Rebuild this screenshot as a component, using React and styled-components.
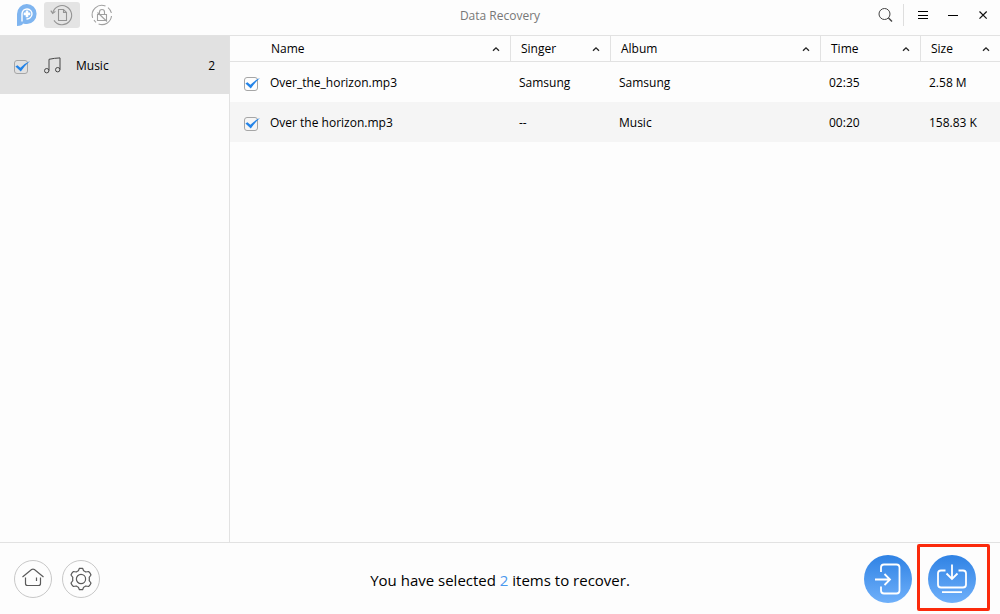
import { useState } from "react";
import styled, { createGlobalStyle } from "styled-components";

const files = [
  {
    name: "Over_the_horizon.mp3",
    singer: "Samsung",
    album: "Samsung",
    time: "02:35",
    size: "2.58 M",
  },
  {
    name: "Over the horizon.mp3",
    singer: "--",
    album: "Music",
    time: "00:20",
    size: "158.83 K",
  },
];

const columns = [
  { label: "Name" },
  { label: "Singer", width: 100 },
  { label: "Album", width: 210 },
  { label: "Time", width: 100 },
  { label: "Size", width: 80 },
];

const Check = ({ label, checked, onChange }) => (
  <CheckWrapper>
    <CheckInput
      type="checkbox"
      aria-label={label}
      checked={checked}
      onChange={onChange}
    />
    {checked && (
      <CheckMark width="18" height="16" viewBox="0 0 18 16">
        <path d="M1.4 6.4 L3.4 5.2 L6.4 7.8 Q10.5 3.4 16 1 Q11 5.4 6.8 11.4 Z" fill="#2484e8" />
      </CheckMark>
    )}
  </CheckWrapper>
);

const App = () => {
  const [selected, setSelected] = useState([true, true]);
  const count = selected.filter(Boolean).length;
  const toggle = (index) =>
    setSelected(selected.map((on, i) => (i === index ? !on : on)));

  return (
    <Window>
      <GlobalStyle />
      <TitleBar>
        <TitleLeft>
          <Logo width="22" height="24" viewBox="0 0 22 24">
            <path
              d="M1 23 V11 A9.8 10 0 1 1 11 21 Q9 21 7 20.4 Q6.6 22.6 1 23 Z"
              fill="#7fb5f0"
            />
            <path
              d="M6 18.6 V11 A5 5 0 1 1 10.4 15.9"
              fill="none"
              stroke="#fff"
              strokeWidth="1.4"
            />
            <path d="M11 7.6 V14.2 M7.7 10.9 H14.3" stroke="#fff" strokeWidth="2.6" />
          </Logo>
          <ModeButton $active aria-label="Recover deleted files">
            <svg width="24" height="24" viewBox="0 0 24 24" fill="none" stroke="#949494" strokeWidth="1.1">
              <path d="M2.7 10 A9.6 9.6 0 1 1 4 17.4" />
              <path d="M0.8 7.6 L2.7 10.4 L5.4 8.4" />
              <path d="M8.5 6.5 H13.5 L16.5 9.5 V17.5 H8.5 Z M13.5 6.5 V9.5 H16.5" />
            </svg>
          </ModeButton>
          <ModeButton aria-label="Unlock device">
            <svg width="24" height="24" viewBox="0 0 24 24" fill="none" stroke="#a0a0a0" strokeWidth="1.1">
              <path d="M2.6 14.8 A9.6 9.6 0 0 1 15.5 3.1 M18 4.6 A9.6 9.6 0 0 1 21.4 10" />
              <path d="M21.5 13 A9.6 9.6 0 0 1 8.6 21 M6 19.4 A9.6 9.6 0 0 1 4 17" />
              <path d="M7.5 11.5 H16.5 V17.5 H7.5 Z M9.5 11.5 V9 A2.5 2.5 0 0 1 14.5 9 V11.5" />
              <path d="M7.5 9.5 L17 18.5" />
            </svg>
          </ModeButton>
        </TitleLeft>
        <Title>Data Recovery</Title>
        <TitleRight>
          <WindowButton aria-label="Search">
            <svg width="16" height="16" viewBox="0 0 16 16" fill="none" stroke="#444">
              <circle cx="7.5" cy="7" r="5.5" />
              <path d="M11.5 11 L15 14.5" strokeWidth="1.4" />
            </svg>
          </WindowButton>
          <Divider />
          <WindowButton aria-label="Menu">
            <svg width="12" height="12" viewBox="0 0 12 12" stroke="#000">
              <path d="M1 2.5 H11 M1 6.5 H11 M1 9.5 H11" />
            </svg>
          </WindowButton>
          <WindowButton aria-label="Minimize">
            <svg width="12" height="12" viewBox="0 0 12 12" stroke="#000">
              <path d="M1 6.5 H11" />
            </svg>
          </WindowButton>
          <WindowButton aria-label="Close">
            <svg width="12" height="12" viewBox="0 0 12 12" stroke="#111" strokeWidth="1.2">
              <path d="M2.5 2.5 L9.7 9.7 M9.7 2.5 L2.5 9.7" />
            </svg>
          </WindowButton>
        </TitleRight>
      </TitleBar>

      <Content>
        <Sidebar>
          <Category>
            <Check
              label="Music"
              checked={count > 0}
              onChange={() => setSelected(files.map(() => count === 0))}
            />
            <NoteIcon width="18" height="18" viewBox="0 0 18 18" fill="none" stroke="#444">
              <circle cx="2.7" cy="13.7" r="2.2" />
              <circle cx="13.7" cy="12.7" r="2.2" />
              <path d="M5 13.5 V2.3 Q10.5 1.1 16 0.9 V12.5" />
            </NoteIcon>
            <CategoryName>Music</CategoryName>
            <span>2</span>
          </Category>
        </Sidebar>

        <FileTable>
          <colgroup>
            {columns.map(({ label, width }) => (
              <Col key={label} $width={width} />
            ))}
          </colgroup>
          <thead>
            <tr>
              {columns.map(({ label }) => (
                <HeadCell key={label} scope="col">
                  <SortButton>
                    {label}
                    <svg width="8" height="6" viewBox="0 0 8 6" fill="none" stroke="#222" strokeWidth="1.3">
                      <path d="M1 4.8 L4 1.8 L7 4.8" />
                    </svg>
                  </SortButton>
                </HeadCell>
              ))}
            </tr>
          </thead>
          <tbody>
            {files.map((file, index) => (
              <FileRow key={file.name}>
                <Cell>
                  <NameGroup>
                    <Check
                      label={file.name}
                      checked={selected[index]}
                      onChange={() => toggle(index)}
                    />
                    {file.name}
                  </NameGroup>
                </Cell>
                <Cell>{file.singer}</Cell>
                <Cell>{file.album}</Cell>
                <Cell>{file.time}</Cell>
                <Cell>{file.size}</Cell>
              </FileRow>
            ))}
          </tbody>
        </FileTable>
      </Content>

      <Footer>
        <FooterLeft>
          <RoundButton aria-label="Home">
            <svg width="24" height="24" viewBox="0 0 24 24" fill="none" stroke="#5a5a5a" strokeWidth="1.2">
              <path d="M1.5 10 L10.6 2.6 Q12 1.6 13.4 2.6 L22.5 10" />
              <path d="M4.5 10.5 V16.5 Q4.5 18.5 6.5 18.5 H17.5 Q19.5 18.5 19.5 16.5 V10.5 M15.5 10.5 V14" />
            </svg>
          </RoundButton>
          <RoundButton aria-label="Settings">
            <svg width="24" height="24" viewBox="0 0 24 24" fill="none" stroke="#5a5a5a" strokeWidth="1.2" strokeLinejoin="round">
              <circle cx="12" cy="12" r="4.6" />
              <path d="M10.4 1.3 H13.6 L14.6 3.8 Q15.6 4.1 16.7 5 L19.6 4.5 Q21.4 6 22 8 L20.2 10.3 Q20.5 12 20.2 13.7 L22 16 Q21.4 18 19.6 19.5 L16.7 19 Q15.6 19.9 14.6 20.2 L13.6 22.7 H10.4 L9.4 20.2 Q8.4 19.9 7.3 19 L4.4 19.5 Q2.6 18 2 16 L3.8 13.7 Q3.5 12 3.8 10.3 L2 8 Q2.6 6 4.4 4.5 L7.3 5 Q8.4 4.1 9.4 3.8 Z" />
            </svg>
          </RoundButton>
        </FooterLeft>
        <Message>
          You have selected <Count>{count}</Count> items to recover.
        </Message>
        <FooterRight>
          <ActionButton aria-label="Recover to device">
            <svg width="48" height="48" viewBox="0 0 48 48" fill="none" stroke="#fff" strokeWidth="1.8">
              <path d="M17 17 V12.5 Q17 9.5 20 9.5 H32.5 Q35.5 9.5 35.5 12.5 V35.5 Q35.5 38.5 32.5 38.5 H20 Q17 38.5 17 35.5 V31.5" />
              <path d="M11 24.5 H25.5 M20.5 19 L26 24.5 L20.5 30" />
            </svg>
          </ActionButton>
          <Highlight>
            <ActionButton aria-label="Recover to computer">
              <svg width="48" height="48" viewBox="0 0 48 48" fill="none" stroke="#fff" strokeWidth="1.8">
                <path d="M17.5 15.5 H13 Q10 15.5 10 18.5 V29.5 Q10 32.5 13 32.5 H35 Q38 32.5 38 29.5 V18.5 Q38 15.5 35 15.5 H30.5" />
                <path d="M24 9.5 V24 M18.5 18.5 L24 24 L29.5 18.5 M14 37.2 H34" />
              </svg>
            </ActionButton>
          </Highlight>
        </FooterRight>
      </Footer>
    </Window>
  );
};

const GlobalStyle = createGlobalStyle`
  * {
    box-sizing: border-box;
  }
  body {
    margin: 0;
    background: #fdfdfd;
  }
  body,
  button {
    font-family: "Open Sans", "Noto Sans", sans-serif;
    font-size: 12px;
    line-height: 16px;
    color: #000;
  }
  button {
    padding: 0;
    border: none;
    background: none;
    cursor: pointer;
  }
  svg {
    display: block;
    flex: none;
  }
`;

const Window = styled.div`
  display: flex;
  flex-direction: column;
  min-height: 100vh;
`;

const TitleBar = styled.header`
  display: grid;
  grid-template-columns: 1fr auto 1fr;
  align-items: center;
  height: 36px;
  padding-bottom: 5px;
  border-bottom: 1px solid #e2e2e2;
`;
const TitleLeft = styled.div`
  display: flex;
  align-items: center;
  gap: 4px;
  padding-left: 16px;
`;
const Logo = styled.svg`
  margin-right: 2px;
`;
const ModeButton = styled.button`
  display: flex;
  align-items: center;
  justify-content: center;
  width: 36px;
  height: 26px;
  border-radius: 3px;
  background: ${({ $active }) => ($active ? "#e4e4e4" : "transparent")};
`;
const Title = styled.h1`
  margin: 0;
  padding-top: 2px;
  font-size: 12px;
  font-weight: 400;
  color: #777;
`;
const TitleRight = styled.div`
  display: flex;
  align-items: center;
  justify-content: flex-end;
  padding-right: 2px;
`;
const WindowButton = styled.button`
  display: flex;
  align-items: center;
  justify-content: center;
  width: 30px;
  height: 26px;
`;
const Divider = styled.div`
  width: 1px;
  height: 22px;
  margin: 0 4px 0 3px;
  background: #dedede;
`;

const Content = styled.main`
  display: flex;
  flex: 1;
  align-items: stretch;
`;
const Sidebar = styled.nav`
  flex: none;
  width: 230px;
  border-right: 1px solid #e2e2e2;
`;
const Category = styled.div`
  display: flex;
  align-items: center;
  height: 58px;
  padding: 2px 14px 0;
  background: #e1e1e1;
`;
const NoteIcon = styled.svg`
  margin: 0 14px 0 16px;
`;
const CategoryName = styled.span`
  flex: 1;
`;

const CheckWrapper = styled.span`
  position: relative;
  display: block;
  flex: none;
  width: 14px;
  height: 14px;
  margin-top: 2px;
`;
const CheckInput = styled.input`
  appearance: none;
  display: block;
  width: 14px;
  height: 14px;
  margin: 0;
  border: 1px solid #a6a6a6;
  border-radius: 3px;
`;
const CheckMark = styled.svg`
  position: absolute;
  top: 0;
  left: 0;
  pointer-events: none;
`;

const FileTable = styled.table`
  flex: 1;
  align-self: flex-start;
  min-width: 0;
  table-layout: fixed;
  border-collapse: separate;
  border-spacing: 0;
`;
const Col = styled.col`
  width: ${({ $width }) => ($width ? `${$width}px` : "auto")};
`;
const HeadCell = styled.th`
  height: 26px;
  padding: 0;
  font-weight: 400;
  border-bottom: 1px solid #e2e2e2;
  border-left: 1px solid #e2e2e2;
  &:first-child {
    padding-left: 31px;
    border-left: none;
  }
`;
const SortButton = styled.button`
  display: flex;
  align-items: center;
  justify-content: space-between;
  width: 100%;
  padding: 0 10px;
`;
const FileRow = styled.tr`
  &:nth-child(even) {
    background: #f5f5f5;
  }
`;
const Cell = styled.td`
  height: 40px;
  padding: 2px 9px 0;
  &:first-child {
    padding-left: 14px;
  }
`;
const NameGroup = styled.div`
  display: flex;
  align-items: center;
  gap: 12px;
`;

const Footer = styled.footer`
  display: grid;
  grid-template-columns: 1fr auto 1fr;
  align-items: center;
  height: 72px;
  padding-top: 1px;
  border-top: 1px solid #e2e2e2;
`;
const FooterLeft = styled.div`
  display: flex;
  gap: 10px;
  padding-left: 14px;
`;
const RoundButton = styled.button`
  display: flex;
  align-items: center;
  justify-content: center;
  width: 38px;
  height: 38px;
  border: 1px solid #c8c8c8;
  border-radius: 50%;
`;
const Message = styled.p`
  margin: 0;
  padding-top: 2px;
  font-size: 15px;
  line-height: 20px;
`;
const Count = styled.span`
  color: #4a98ee;
`;
const FooterRight = styled.div`
  display: flex;
  justify-content: flex-end;
  gap: 16px;
  padding-right: 24px;
`;
const ActionButton = styled.button`
  display: block;
  width: 48px;
  height: 48px;
  border-radius: 50%;
  background: linear-gradient(#2f82e4, #6fb0fa);
`;
const Highlight = styled.div`
  position: relative;
  &::after {
    content: "";
    position: absolute;
    inset: -11px -14px -8px -11px;
    border: 3px solid #fb2a0c;
    border-radius: 2px;
    pointer-events: none;
  }
`;

export default App;
